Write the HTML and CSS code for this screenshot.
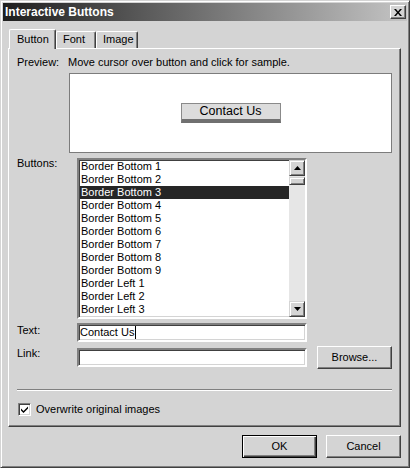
FILE: index.html
```html
<!DOCTYPE html>
<html>
<head>
<meta charset="utf-8">
<link rel="stylesheet" href="styles.css">
</head>
<body>
<div class="window">
  <div class="titlebar">
    <span class="title">Interactive Buttons</span>
    <span class="close"><svg width="8" height="7" viewBox="0 0 8 7"><path d="M0 0h2l2 2.5L6 0h2L5 3.5 8 7H6L4 4.5 2 7H0l3-3.5z" fill="#000"/></svg></span>
  </div>
  <div class="content">
    <div class="tabs">
      <div class="tab active">Button</div>
      <div class="tab">Font</div>
      <div class="tab">Image</div>
    </div>
    <div class="panel">
      <div class="preview-row">
        <span class="preview-label">Preview:</span>
        <span>Move cursor over button and click for sample.</span>
      </div>
      <div class="preview-box">
        <div class="sample-btn">Contact Us</div>
      </div>
      <div class="form">
        <div class="label label-buttons">Buttons:</div>
        <div class="listbox">
          <div class="items">
            <div class="item">Border Bottom 1</div>
            <div class="item">Border Bottom 2</div>
            <div class="item selected">Border Bottom 3</div>
            <div class="item">Border Bottom 4</div>
            <div class="item">Border Bottom 5</div>
            <div class="item">Border Bottom 6</div>
            <div class="item">Border Bottom 7</div>
            <div class="item">Border Bottom 8</div>
            <div class="item">Border Bottom 9</div>
            <div class="item">Border Left 1</div>
            <div class="item">Border Left 2</div>
            <div class="item">Border Left 3</div>
            <div class="item">Border Left 4</div>
          </div>
          <div class="scrollbar">
            <div class="sb-btn"><svg width="7" height="4" viewBox="0 0 7 4"><path d="M3.5 0L7 4H0z" fill="#000"/></svg></div>
            <div class="track"><div class="thumb"></div></div>
            <div class="sb-btn"><svg width="7" height="4" viewBox="0 0 7 4"><path d="M0 0h7L3.5 4z" fill="#000"/></svg></div>
          </div>
        </div>
        <div></div>
        <div class="label">Text:</div>
        <div class="input"><span class="value">Contact Us</span><span class="caret"></span></div>
        <div></div>
        <div class="label">Link:</div>
        <div class="input link-input"></div>
        <div class="button browse">Browse...</div>
      </div>
      <div class="separator"></div>
      <div class="check-row">
        <span class="checkbox"><svg width="9" height="9" viewBox="0 0 9 9"><path d="M1 3.5l2.5 2.5L8 1.5v2L3.5 8 1 5.5z" fill="#000"/></svg></span>
        <span>Overwrite original images</span>
      </div>
    </div>
    <div class="footer">
      <div class="button default">OK</div>
      <div class="button">Cancel</div>
    </div>
  </div>
</div>
</body>
</html>
```
FILE: styles.css
```css
* { box-sizing: border-box; }
html, body { margin: 0; padding: 0; }
body {
  width: 410px;
  height: 468px;
  background: #d4d4d4;
  font-family: "Liberation Sans", Arial, sans-serif;
  font-size: 11px;
  color: #000;
}
.window {
  width: 410px;
  height: 468px;
  background: #d4d4d4;
  border: 1px solid;
  border-color: #d4d4d4 #404040 #404040 #d4d4d4;
  box-shadow: inset 1px 1px #fff, inset -1px -1px #808080;
  padding: 2px;
  display: flex;
  flex-direction: column;
}
.titlebar {
  height: 18px;
  background: linear-gradient(to right, #1e1e1e 0%, #5a5a5a 35%, #c4c4c4 100%);
  display: flex;
  align-items: center;
  justify-content: space-between;
  padding: 0 1px 0 2px;
}
.title {
  color: #fff;
  font-weight: bold;
  font-size: 12px;
  line-height: 14px;
}
.close {
  width: 16px;
  height: 14px;
  background: #d4d4d4;
  border: 1px solid;
  border-color: #fff #404040 #404040 #fff;
  box-shadow: inset -1px -1px #808080;
  display: flex;
  align-items: center;
  justify-content: center;
}
.content {
  flex: 1;
  display: flex;
  flex-direction: column;
  padding: 8px 6px 0 5px;
}
.tabs {
  display: flex;
  align-items: flex-end;
  height: 19px;
  padding-left: 1px;
  position: relative;
  z-index: 1;
}
.tab {
  height: 17px;
  padding: 0 6px;
  line-height: 15px;
  border: 1px solid;
  border-bottom: none;
  border-color: #fff #404040 #404040 #fff;
  border-radius: 2px 2px 0 0;
  box-shadow: inset -1px 0 #808080;
  background: #d4d4d4;
}
.tab:nth-child(2) { width: 40px; }
.tab:nth-child(3) { width: 42px; }
.tab.active {
  width: 47px;
  height: 20px;
  margin-bottom: -1px;
  padding-left: 7px;
  line-height: 18px;
}
.panel {
  height: 379px;
  border: 1px solid;
  border-color: #fff #404040 #404040 #fff;
  box-shadow: inset -1px -1px #808080;
  padding: 0 8px;
  display: flex;
  flex-direction: column;
}
.preview-row {
  display: flex;
  margin-top: 7px;
  line-height: 13px;
}
.preview-label { width: 51px; }
.preview-box {
  margin: 4px 0 0 52px;
  width: 323px;
  height: 80px;
  background: #fff;
  border: 1px solid #7c7c7c;
  display: flex;
  align-items: center;
  justify-content: center;
}
.sample-btn {
  width: 100px;
  height: 20px;
  background: #dcdcdc;
  border: 1px solid #8a8a8a;
  border-bottom: 4px solid #707070;
  font-size: 12.5px;
  line-height: 15px;
  text-align: center;
}
.form {
  margin-top: 5px;
  display: grid;
  grid-template-columns: 50px 230px 75px;
  column-gap: 10px;
  row-gap: 4px;
  align-items: center;
}
.label {
  align-self: start;
  padding-top: 1px;
  line-height: 13px;
}
.label-buttons { padding-top: 0; margin-top: -1px; }
.listbox {
  height: 161px;
  background: #fff;
  border: 2px solid;
  border-color: #808080 #fff #fff #808080;
  box-shadow: inset 1px 1px #404040, inset -1px -1px #d4d4d4;
  display: flex;
  overflow: hidden;
}
.items {
  flex: 1;
  padding: 0 0 0 1px;
  overflow: hidden;
}
.item {
  height: 13px;
  line-height: 13px;
  padding-left: 1px;
  white-space: nowrap;
}
.item.selected {
  background: #262626;
  color: #fff;
}
.scrollbar {
  width: 16px;
  display: flex;
  flex-direction: column;
}
.sb-btn {
  height: 16px;
  background: #d4d4d4;
  border: 1px solid;
  border-color: #d4d4d4 #404040 #404040 #d4d4d4;
  box-shadow: inset 1px 1px #fff, inset -1px -1px #808080;
  display: flex;
  align-items: center;
  justify-content: center;
}
.track {
  flex: 1;
  background: #e6e6e6;
  padding-top: 1px;
}
.thumb {
  height: 8px;
  background: #d4d4d4;
  border: 1px solid;
  border-color: #d4d4d4 #404040 #404040 #d4d4d4;
  box-shadow: inset 1px 1px #fff, inset -1px -1px #808080;
}
.input {
  height: 19px;
  background: #fff;
  border: 2px solid;
  border-color: #808080 #fff #fff #808080;
  box-shadow: inset 1px 1px #404040, inset -1px -1px #d4d4d4;
  padding-left: 1px;
  display: flex;
  align-items: center;
}
.value { line-height: 13px; }
.caret {
  display: inline-block;
  width: 1px;
  height: 13px;
  background: #000;
  margin-left: 1px;
}
.button {
  height: 23px;
  background: #d4d4d4;
  border: 1px solid;
  border-color: #fff #404040 #404040 #fff;
  box-shadow: inset -1px -1px #808080;
  display: flex;
  align-items: center;
  justify-content: center;
  line-height: 13px;
}
.browse { width: 75px; }
.separator {
  margin-top: 20px;
  height: 2px;
  border-top: 1px solid #808080;
  border-bottom: 1px solid #fff;
}
.check-row {
  margin-top: 12px;
  padding-left: 1px;
  display: flex;
  align-items: center;
  gap: 5px;
  line-height: 13px;
}
.checkbox {
  width: 13px;
  height: 13px;
  background: #fff;
  border: 1px solid;
  border-color: #808080 #fff #fff #808080;
  box-shadow: inset 1px 1px #404040, inset -1px -1px #d4d4d4;
  display: flex;
  align-items: center;
  justify-content: center;
}
.footer {
  display: flex;
  justify-content: flex-end;
  gap: 9px;
  padding-top: 8px;
}
.footer .button {
  width: 75px;
  height: 23px;
}
.button.default {
  border: 1px solid #000;
  box-shadow: inset 1px 1px #fff, inset -1px -1px #404040, inset -2px -2px #808080;
}
```
